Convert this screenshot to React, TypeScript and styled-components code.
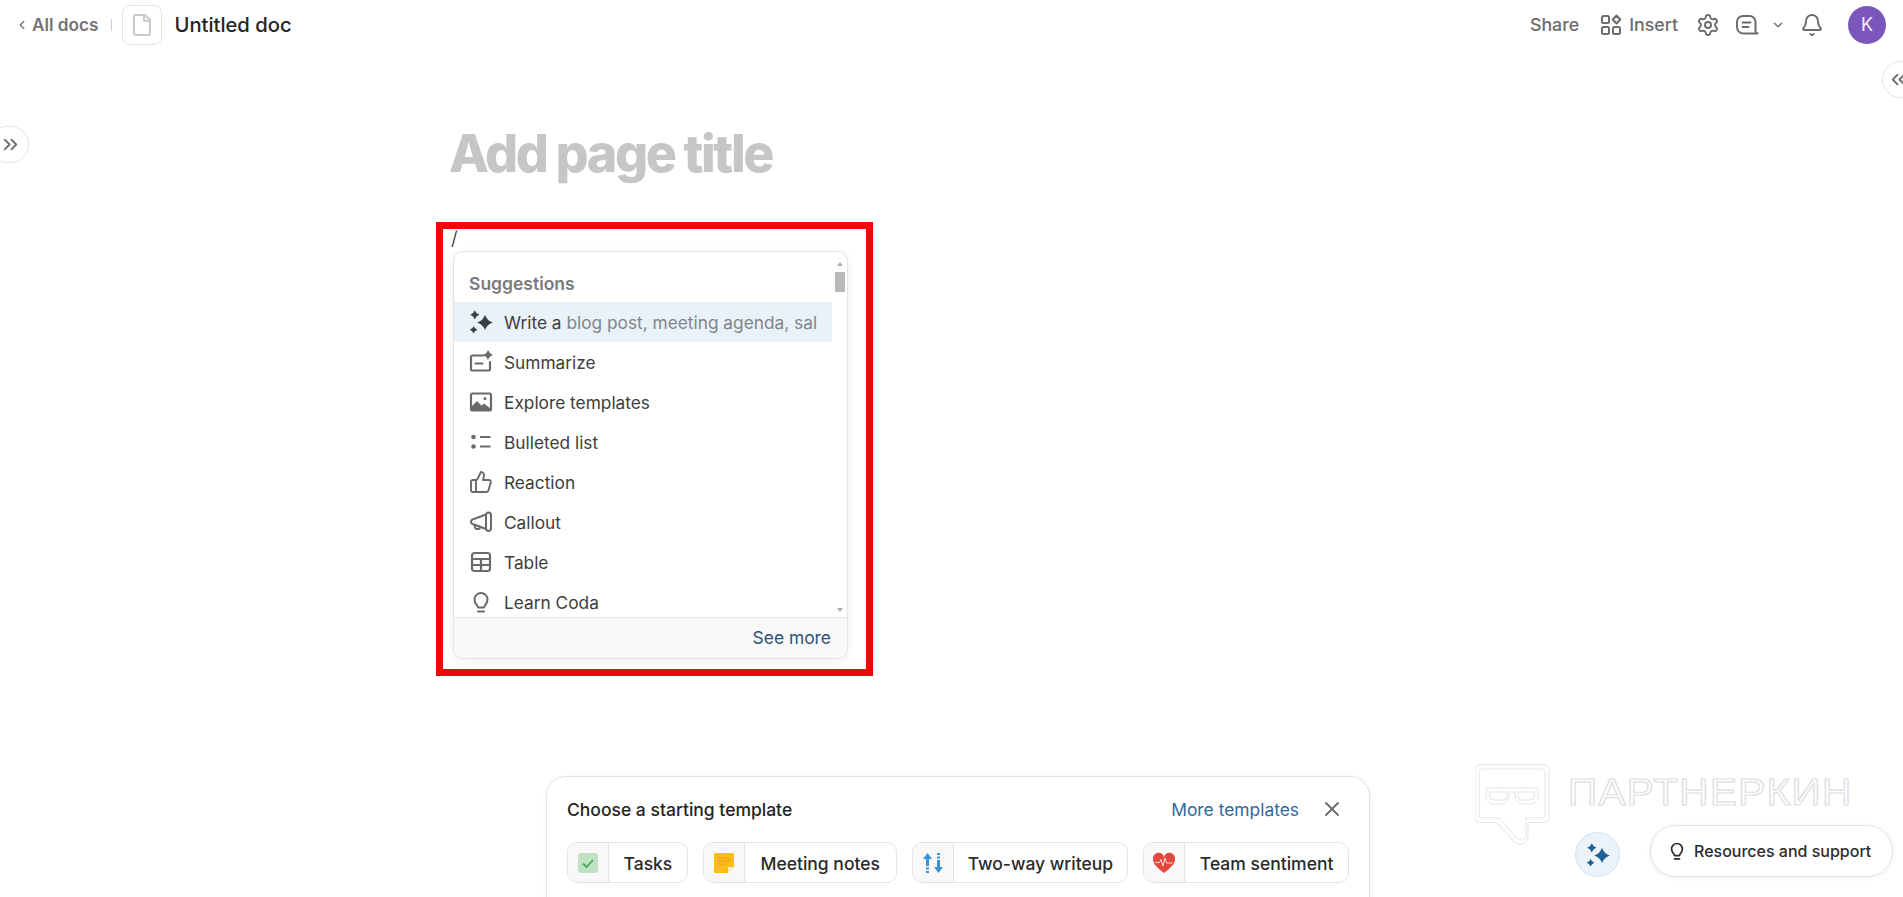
import React from "react";
import styled, { createGlobalStyle } from "styled-components";
import { ChevronLeft, ChevronDown, ChevronsLeft, ChevronsRight, File, Settings, Bell, X, ThumbsUp } from "lucide-react";

const Global = createGlobalStyle`
  html, body { margin: 0; padding: 0; background: #fff; }
  body { font-family: Inter, "Noto Sans", "Liberation Sans", sans-serif; color: #222; overflow: hidden; }
`;

const Page = styled.div`
  position: relative;
  height: 897px;
  overflow: hidden;
  background: #fff;
`;

const Header = styled.header`
  display: flex;
  align-items: center;
  justify-content: space-between;
  height: 49px;
  padding: 0 17px 0 15px;
`;

const HeaderGroup = styled.div`
  display: flex;
  align-items: center;
`;

const BackLink = styled.a`
  display: flex;
  align-items: center;
  gap: 3px;
  font-size: 17.2px;
  font-weight: 600;
  color: #747474;
`;

const Divider = styled.span`
  width: 1px;
  height: 12px;
  margin: 0 10px 0 13px;
  background: #cfcfcf;
`;

const DocIcon = styled.span`
  display: flex;
  align-items: center;
  justify-content: center;
  width: 38px;
  height: 38px;
  border: 1px solid #e3e3e3;
  border-radius: 8px;
  color: #c9c9c9;
`;

const DocName = styled.span`
  margin-left: 12px;
  font-size: 20.2px;
  font-weight: 500;
  color: #242424;
`;

const ActionText = styled.span<{ $ml?: number }>`
  margin-left: ${(p) => p.$ml ?? 0}px;
  font-size: 17.8px;
  font-weight: 500;
  color: #6c6c6c;
`;

const IconSlot = styled.span<{ $ml: number }>`
  display: flex;
  margin-left: ${(p) => p.$ml}px;
  color: #6c6c6c;
`;

const Avatar = styled.span`
  display: flex;
  align-items: center;
  justify-content: center;
  width: 38px;
  height: 38px;
  margin-left: 24px;
  border-radius: 50%;
  background: #7b57bb;
  color: #f1ecf9;
  font-size: 18px;
`;

const Sheet = styled.main`
  padding: 71px 0 0 449px;
`;

const Title = styled.h1`
  margin: 0;
  font-size: 52px;
  line-height: 68px;
  font-weight: 800;
  letter-spacing: -2.4px;
  color: #c6c6c6;
`;

const Slash = styled.div`
  margin: 39px 0 0 2px;
  font-size: 19px;
  line-height: 24px;
  font-weight: 300;
  color: #222;
`;

const SideToggle = styled.button<{ $side: "left" | "right" }>`
  position: absolute;
  display: flex;
  align-items: center;
  justify-content: ${(p) => (p.$side === "left" ? "flex-end" : "flex-start")};
  top: ${(p) => (p.$side === "left" ? 126 : 61)}px;
  ${(p) => (p.$side === "left" ? "left: -12px;" : "right: -24px;")}
  width: ${(p) => (p.$side === "left" ? 41 : 45)}px;
  height: 37px;
  padding: 0 ${(p) => (p.$side === "left" ? 6 : 4)}px;
  border: 1px solid #e4e4e4;
  border-radius: 19px;
  background: #fff;
  color: #6c6c6c;
`;

const Menu = styled.div`
  position: absolute;
  left: 453px;
  top: 251px;
  width: 393px;
  height: 406px;
  display: flex;
  flex-direction: column;
  overflow: hidden;
  border: 1px solid #e4e4e4;
  border-radius: 10px;
  background: #fff;
  box-shadow: 0 2px 8px rgba(0, 0, 0, 0.07);
`;

const MenuBody = styled.div`
  flex: 1;
  min-height: 0;
  display: flex;
`;

const MenuList = styled.div`
  flex: 1;
  min-width: 0;
  overflow: hidden;
`;

const MenuHeading = styled.div`
  height: 50px;
  padding: 14px 15px 0;
  box-sizing: border-box;
  line-height: 36px;
  font-size: 17.5px;
  font-weight: 600;
  color: #7a7a7a;
`;

const MenuRow = styled.div<{ $active?: boolean }>`
  display: flex;
  align-items: center;
  height: 40px;
  padding: 0 15px;
  background: ${(p) => (p.$active ? "#e9f2f8" : "transparent")};
  font-size: 17.3px;
  color: #3d3d3d;
  white-space: nowrap;
`;

const RowIcon = styled.span<{ $dark?: boolean }>`
  flex: none;
  display: flex;
  justify-content: center;
  width: 24px;
  margin-right: 11px;
  color: ${(p) => (p.$dark ? "#3b4046" : "#6a6a6a")};
`;

const RowText = styled.span`
  overflow: hidden;
  flex: 1;
  min-width: 0;
  padding-top: 1px;
`;

const Hint = styled.span`
  color: #7f858b;
`;

const ScrollBar = styled.div`
  flex: none;
  width: 15px;
  display: flex;
  flex-direction: column;
  align-items: center;
  padding: 10px 0 5px;
  box-sizing: border-box;
`;

const ScrollArrow = styled.span<{ $down?: boolean }>`
  width: 0;
  height: 0;
  border-left: 3px solid transparent;
  border-right: 3px solid transparent;
  ${(p) => (p.$down ? "border-top: 4px solid #b0b0b0; margin-top: auto;" : "border-bottom: 4px solid #b0b0b0;")}
`;

const ScrollThumb = styled.span`
  width: 10px;
  height: 20px;
  margin-top: 6px;
  background: #b9b9b9;
`;

const MenuFooter = styled.div`
  flex: none;
  height: 41px;
  box-sizing: border-box;
  display: flex;
  align-items: center;
  justify-content: flex-end;
  padding: 0 16px 2px;
  border-top: 1px solid #e6e6e6;
  background: #f9f9f9;
  font-size: 17.4px;
  color: #2f5278;
`;

const Annotation = styled.div`
  position: absolute;
  left: 436px;
  top: 222px;
  width: 437px;
  height: 454px;
  box-sizing: border-box;
  border: 7px solid #ee0808;
  pointer-events: none;
`;

const TemplateCard = styled.section`
  position: absolute;
  left: 546px;
  top: 776px;
  width: 824px;
  height: 160px;
  box-sizing: border-box;
  padding: 16px 20px 0;
  border: 1px solid #e2e2e2;
  border-radius: 20px;
  background: #fff;
  box-shadow: 0 1px 6px rgba(0, 0, 0, 0.05);
`;

const CardHead = styled.div`
  display: flex;
  align-items: center;
  height: 32px;
  margin-bottom: 17px;
`;

const CardTitle = styled.span`
  flex: 1;
  font-size: 17.5px;
  font-weight: 500;
  color: #252525;
`;

const CardLink = styled.span`
  font-size: 17.4px;
  color: #33699a;
`;

const CloseSlot = styled.span`
  display: flex;
  margin: 0 5px 0 21px;
  color: #6c6c6c;
`;

const ChipRow = styled.div`
  display: flex;
  gap: 15px;
`;

const Chip = styled.div<{ $w: number }>`
  display: flex;
  width: ${(p) => p.$w}px;
  height: 41px;
  box-sizing: border-box;
  overflow: hidden;
  border: 1px solid #e4e4e4;
  border-radius: 10px;
`;

const ChipIcon = styled.span`
  flex: none;
  display: flex;
  align-items: center;
  justify-content: center;
  width: 40px;
  border-right: 1px solid #e4e4e4;
  background: #f8f8f8;
`;

const ChipLabel = styled.span`
  flex: 1;
  text-align: center;
  line-height: 41px;
  font-size: 17.5px;
  font-weight: 500;
  color: #2a2a2a;
  white-space: nowrap;
`;

const Watermark = styled.div`
  position: absolute;
  left: 1475px;
  top: 764px;
  display: flex;
  gap: 18px;
  pointer-events: none;
`;

const WatermarkText = styled.span`
  margin-top: 8px;
  font-family: "Liberation Sans", sans-serif;
  font-size: 37px;
  line-height: 42px;
  letter-spacing: 1.2px;
  color: #fff;
  -webkit-text-stroke: 1.2px #dedede;
  transform-origin: left top;
  transform: scaleX(1.095);
`;

const AiButton = styled.button`
  position: absolute;
  left: 1575px;
  top: 832px;
  display: flex;
  align-items: center;
  justify-content: center;
  width: 45px;
  height: 45px;
  padding: 0;
  border: 1px solid #cfe2ee;
  border-radius: 50%;
  background: #e9f3f9;
`;

const HelpPill = styled.button`
  position: absolute;
  left: 1650px;
  top: 825px;
  display: flex;
  align-items: center;
  gap: 7px;
  width: 243px;
  height: 52px;
  box-sizing: border-box;
  padding: 0 14px 0 16px;
  border: 1px solid #e4e4e4;
  border-radius: 26px;
  background: #fff;
  box-shadow: 0 1px 5px rgba(0, 0, 0, 0.07);
  font-family: inherit;
  font-size: 16px;
  font-weight: 500;
  color: #2c2c2c;
  white-space: nowrap;
`;

const star = (x: number, y: number, r: number) =>
  `M${x} ${y - r}Q${x + r * 0.24} ${y - r * 0.24} ${x + r} ${y}Q${x + r * 0.24} ${y + r * 0.24} ${x} ${y + r}Q${x - r * 0.24} ${y + r * 0.24} ${x - r} ${y}Q${x - r * 0.24} ${y - r * 0.24} ${x} ${y - r}Z`;

const Sparkles = ({ color, size = 24 }: { color: string; size?: number }) => (
  <svg width={size} height={size} viewBox="0 0 24 24" fill={color}>
    <path d={star(16, 12.5, 7.8)} />
    <path d={star(5.8, 4.8, 4.6)} />
    <path d={star(4.6, 19.8, 3.8)} />
  </svg>
);

const Summarize = () => (
  <svg width="24" height="24" viewBox="0 0 24 24" fill="none" stroke="currentColor" strokeWidth="2.2" strokeLinecap="round">
    <path d="M14.500 5.500H3.500a1.500 1.500 0 0 0-1.500 1.500v12a1.500 1.500 0 0 0 1.500 1.500h16.500a1 1 0 0 0 1-1v-7.500" />
    <path d="M6.500 13.500h7" />
    <path d={star(19, 5, 5.200)} fill="currentColor" stroke="none" />
  </svg>
);

const Picture = () => (
  <svg width="24" height="24" viewBox="0 0 24 24" fill="none" stroke="currentColor" strokeWidth="2.2">
    <rect x="2" y="3.500" width="20" height="17" rx="1.800" />
    <path d="M2.500 20v-3.500l5.500-5.500 4.500 4.500 2.500-2 6.500 5v1.500z" fill="currentColor" stroke="none" />
    <circle cx="16" cy="8.500" r="1.500" fill="currentColor" stroke="none" />
  </svg>
);

const Bullets = () => (
  <svg width="24" height="24" viewBox="0 0 24 24" fill="none" stroke="currentColor" strokeWidth="2.2">
    <circle cx="4.500" cy="7" r="2.300" fill="currentColor" stroke="none" />
    <circle cx="4.500" cy="16.500" r="2.300" fill="currentColor" stroke="none" />
    <path d="M11 7h10.500M11 16.500h10.500" />
  </svg>
);

const Horn = () => (
  <svg width="24" height="24" viewBox="0 0 24 24" fill="none" stroke="currentColor" strokeWidth="2" strokeLinecap="round" strokeLinejoin="round">
    <path d="M19.500 2.500c1.700 0 2.500 1.200 2.500 2.700v13.100c0 1.500-.8 2.700-2.500 2.700S17 19.800 17 18.300V5.200c0-1.500.8-2.700 2.500-2.700z" />
    <path d="M17 4.500L3.500 9.500c-1 .4-1.500 1.200-1.500 2.200s.5 1.900 1.500 2.300L17 19" />
    <path d="M5.500 14.800l.5 2.700c.2 1 1 1.500 2 1.500h1.500c1 0 1.600-.8 1.400-1.800l-.3-.7" />
  </svg>
);

const Grid = () => (
  <svg width="24" height="24" viewBox="0 0 24 24" fill="none" stroke="currentColor" strokeWidth="2.2" strokeLinejoin="round">
    <rect x="3" y="3" width="18" height="18" rx="2.500" />
    <path d="M3 9h18M3 15h18M12 9v12" />
  </svg>
);

const Bulb = ({ size = 24 }: { size?: number }) => (
  <svg width={size} height={size} viewBox="0 0 24 24" fill="none" stroke="currentColor" strokeWidth="2" strokeLinecap="round" strokeLinejoin="round">
    <path d="M9 17.500c0-2-3.500-3.500-3.500-8a6.500 6.500 0 0 1 13 0c0 4.500-3.500 6-3.500 8z" />
    <path d="M9 21.500h6" />
  </svg>
);

const Shapes = () => (
  <svg width="22" height="22" viewBox="0 0 22 22" fill="none" stroke="currentColor" strokeWidth="2">
    <rect x="2" y="2" width="7" height="7" rx="1.500" />
    <rect x="2" y="13" width="7" height="7" rx="1.500" />
    <rect x="13" y="13" width="7" height="7" rx="1.500" />
    <path d="M16.500 1.500l3.800 4-3.800 4-3.800-4z" strokeLinejoin="round" />
  </svg>
);

const Comment = () => (
  <svg width="24" height="24" viewBox="0 0 24 24" fill="none" stroke="currentColor" strokeWidth="2" strokeLinecap="round" strokeLinejoin="round">
    <path d="M20.500 18V9a6 6 0 0 0-6-6H8a6 6 0 0 0-6 6v5a6.500 6.500 0 0 0 6.500 6.500H22.500A3 3 0 0 1 20.500 18z" />
    <path d="M7.500 9.500h8M7.500 14h6" />
  </svg>
);

const TasksIcon = () => (
  <svg width="20" height="20" viewBox="0 0 20 20">
    <rect width="20" height="20" rx="3" fill="#bfe2c3" />
    <path d="M5 10.500l3.500 3.500 6.500-7" fill="none" stroke="#48a852" strokeWidth="1.800" />
  </svg>
);

const NotesIcon = () => (
  <svg width="20" height="20" viewBox="0 0 20 20">
    <path d="M1 0h18a1 1 0 0 1 1 1v13l-6 6H1a1 1 0 0 1-1-1V1a1 1 0 0 1 1-1z" fill="#fbbd1c" />
    <path d="M14 20v-5a1 1 0 0 1 1-1h5z" fill="#fbeec4" />
    <path d="M3 5h14M3 8h14M3 11h8" stroke="#ee9c10" strokeWidth="1" />
  </svg>
);

const TwoWayIcon = () => (
  <svg width="24" height="24" viewBox="0 0 24 24" fill="#3a94d2" stroke="#3a94d2">
    <path d="M6.500 2l4.500 6H2z" stroke="none" />
    <path d="M6.500 8v14" fill="none" strokeWidth="3" strokeDasharray="7 1.500 2 1.500 2" />
    <path d="M17.500 22l4.500-6h-9z" stroke="none" />
    <path d="M17.500 2v14" fill="none" strokeWidth="3" strokeDasharray="2 1.500 2 1.500 8" />
  </svg>
);

const HeartIcon = () => (
  <svg width="24" height="22" viewBox="0 0 24 22">
    <path d="M12 21C5 15.500 1 12 1 7a5.500 5.500 0 0 1 11-1.500A5.500 5.500 0 0 1 23 7c0 5-4 8.500-11 14z" fill="#e4483d" />
    <path d="M3 10.500h4.500l1.500-3 2 6.500 2-8 1.500 5h6" fill="none" stroke="#fbdcd8" strokeWidth="1" />
  </svg>
);

const WatermarkLogo = () => (
  <svg width="75" height="82" viewBox="0 0 75 82" fill="none" stroke="#e4e4e4" strokeWidth="1">
    <path d="M5 .500h64a5 5 0 0 1 5 5v48a5 5 0 0 1-5 5H53v14a8 8 0 0 1-14 5L22 58.500H5a5 5 0 0 1-5-5v-48a5 5 0 0 1 5-5z" />
    <path d="M7 5h60a3 3 0 0 1 3 3v43a3 3 0 0 1-3 3H51v17a5 5 0 0 1-9 3L24 54H7a3 3 0 0 1-3-3V8a3 3 0 0 1 3-3z" />
    <path d="M11 24h52v8a8 8 0 0 1-8 8h-7a8 8 0 0 1-8-8v-4h-6v4a8 8 0 0 1-8 8h-7a8 8 0 0 1-8-8z" />
    <path d="M15 28h17v4a4 4 0 0 1-4 4h-9a4 4 0 0 1-4-4zM43 28h16v4a4 4 0 0 1-4 4h-8a4 4 0 0 1-4-4z" />
  </svg>
);

const rows: { icon: React.ReactNode; label: string }[] = [
  { icon: <Summarize />, label: "Summarize" },
  { icon: <Picture />, label: "Explore templates" },
  { icon: <Bullets />, label: "Bulleted list" },
  { icon: <ThumbsUp size={24} strokeWidth={1.9} />, label: "Reaction" },
  { icon: <Horn />, label: "Callout" },
  { icon: <Grid />, label: "Table" },
  { icon: <Bulb />, label: "Learn Coda" },
];

const chips: { icon: React.ReactNode; label: string; w: number }[] = [
  { icon: <TasksIcon />, label: "Tasks", w: 121 },
  { icon: <NotesIcon />, label: "Meeting notes", w: 194 },
  { icon: <TwoWayIcon />, label: "Two-way writeup", w: 217 },
  { icon: <HeartIcon />, label: "Team sentiment", w: 206 },
];

export default function App() {
  return (
    <Page>
      <Global />
      <Header>
        <HeaderGroup>
          <BackLink>
            <ChevronLeft size={14} strokeWidth={2.4} />
            All docs
          </BackLink>
          <Divider />
          <DocIcon>
            <File size={24} strokeWidth={2} />
          </DocIcon>
          <DocName>Untitled doc</DocName>
        </HeaderGroup>
        <HeaderGroup>
          <ActionText>Share</ActionText>
          <IconSlot $ml={21}>
            <Shapes />
          </IconSlot>
          <ActionText $ml={7}>Insert</ActionText>
          <IconSlot $ml={18}>
            <Settings size={24} strokeWidth={1.9} />
          </IconSlot>
          <IconSlot $ml={15}>
            <Comment />
          </IconSlot>
          <IconSlot $ml={12}>
            <ChevronDown size={14} strokeWidth={2.2} />
          </IconSlot>
          <IconSlot $ml={15}>
            <Bell size={24} strokeWidth={1.9} />
          </IconSlot>
          <Avatar>K</Avatar>
        </HeaderGroup>
      </Header>

      <Sheet>
        <Title>Add page title</Title>
        <Slash>/</Slash>
      </Sheet>

      <SideToggle $side="left">
        <ChevronsRight size={23} strokeWidth={1.9} />
      </SideToggle>
      <SideToggle $side="right">
        <ChevronsLeft size={23} strokeWidth={1.9} />
      </SideToggle>

      <Menu>
        <MenuBody>
          <MenuList>
            <MenuHeading>Suggestions</MenuHeading>
            <MenuRow $active>
              <RowIcon $dark>
                <Sparkles color="currentColor" />
              </RowIcon>
              <RowText>
                Write a <Hint>blog post, meeting agenda, sales pitch</Hint>
              </RowText>
            </MenuRow>
            {rows.map((r) => (
              <MenuRow key={r.label}>
                <RowIcon>{r.icon}</RowIcon>
                <RowText>{r.label}</RowText>
              </MenuRow>
            ))}
          </MenuList>
          <ScrollBar>
            <ScrollArrow />
            <ScrollThumb />
            <ScrollArrow $down />
          </ScrollBar>
        </MenuBody>
        <MenuFooter>See more</MenuFooter>
      </Menu>

      <Annotation />

      <TemplateCard>
        <CardHead>
          <CardTitle>Choose a starting template</CardTitle>
          <CardLink>More templates</CardLink>
          <CloseSlot>
            <X size={24} strokeWidth={1.8} />
          </CloseSlot>
        </CardHead>
        <ChipRow>
          {chips.map((c) => (
            <Chip key={c.label} $w={c.w}>
              <ChipIcon>{c.icon}</ChipIcon>
              <ChipLabel>{c.label}</ChipLabel>
            </Chip>
          ))}
        </ChipRow>
      </TemplateCard>

      <Watermark>
        <WatermarkLogo />
        <WatermarkText>ПАРТНЕРКИН</WatermarkText>
      </Watermark>

      <AiButton>
        <Sparkles color="#1d6096" />
      </AiButton>
      <HelpPill>
        <Bulb size={20} />
        Resources and support
      </HelpPill>
    </Page>
  );
}
